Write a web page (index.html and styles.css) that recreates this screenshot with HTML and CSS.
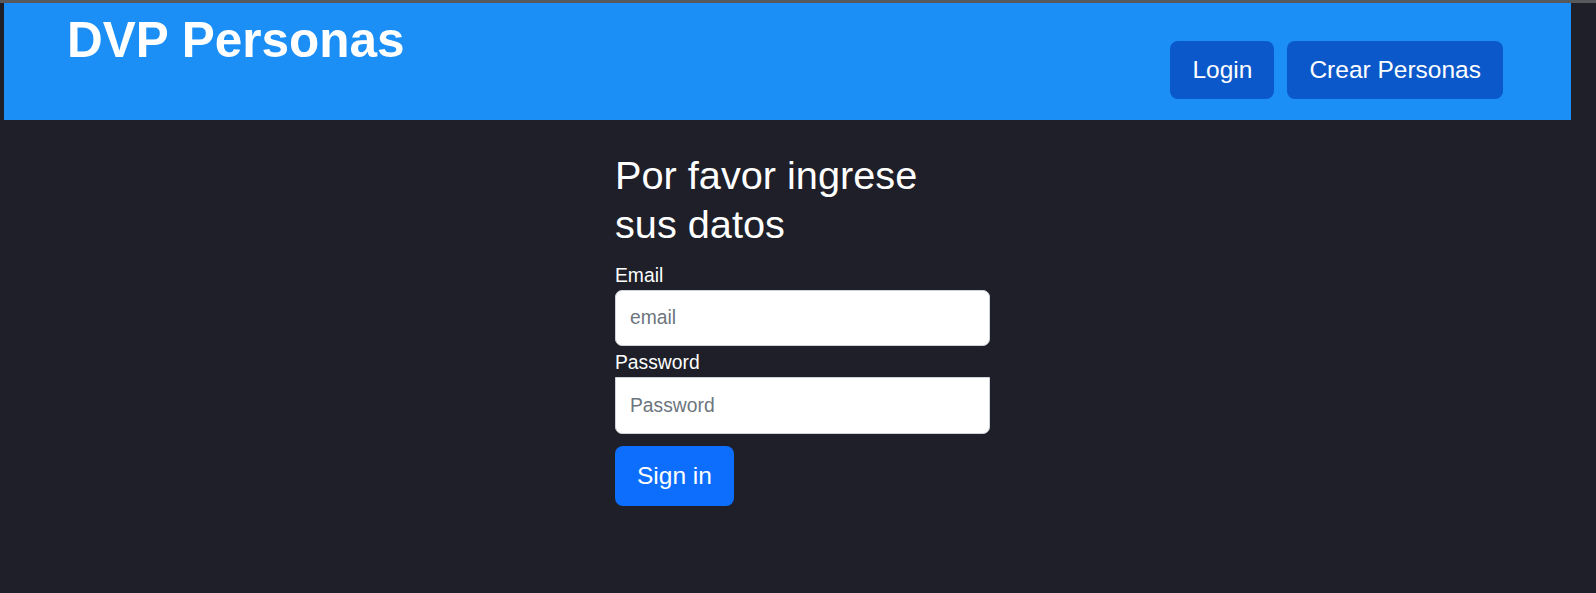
FILE: index.html
```html
<!DOCTYPE html>
<html lang="es">
<head>
<meta charset="utf-8">
<title>DVP Personas</title>
<link rel="stylesheet" href="styles.css">
</head>
<body>
<div class="topline"></div>
<header class="header">
  <h1 class="brand">DVP Personas</h1>
  <nav class="nav">
    <a class="nav-btn" href="#">Login</a>
    <a class="nav-btn" href="#">Crear Personas</a>
  </nav>
</header>
<main class="main">
  <form class="signin">
    <h2 class="signin-title">Por favor ingrese sus datos</h2>
    <label class="field-label" for="email">Email</label>
    <input class="field field-email" id="email" type="email" placeholder="email">
    <label class="field-label" for="password">Password</label>
    <input class="field field-password" id="password" type="password" placeholder="Password">
    <button class="submit" type="button">Sign in</button>
  </form>
</main>
</body>
</html>
```
FILE: styles.css
```css
* { box-sizing: border-box; }
html, body {
  margin: 0;
  padding: 0;
  background: #1e1f29;
  font-family: "Liberation Sans", Arial, sans-serif;
  color: #fff;
}
.topline {
  height: 3px;
  background: #58595d;
}
.header {
  display: flex;
  justify-content: space-between;
  align-items: flex-start;
  height: 117px;
  margin: 0 25px 0 4px;
  padding: 0 68px 0 63px;
  background: #1b8ff5;
}
.brand {
  margin: 7px 0 0;
  font-size: 49.5px;
  line-height: 60px;
  font-weight: 700;
  color: #fff;
}
.nav {
  display: flex;
  gap: 13px;
  margin-top: 38px;
}
.nav-btn {
  display: flex;
  align-items: center;
  height: 58px;
  padding: 0 22px;
  border-radius: 8px;
  background: #0b58ca;
  color: #fff;
  text-decoration: none;
  font-size: 24.5px;
}
.main {
  display: flex;
  justify-content: center;
  padding-left: 9px;
}
.signin {
  width: 375px;
  display: flex;
  flex-direction: column;
  align-items: flex-start;
  margin-top: 31px;
}
.signin-title {
  max-width: 340px;
  margin: 0 0 12px;
  font-size: 39.7px;
  line-height: 49px;
  font-weight: 400;
  color: #fff;
}
.field-label {
  font-size: 19.3px;
  line-height: 29px;
  color: #fff;
}
.field {
  width: 100%;
  height: 56px;
  padding: 0 14px;
  border: 1px solid #ced4da;
  background: #fff;
  font-family: "Liberation Sans", Arial, sans-serif;
  font-size: 19.3px;
  color: #212529;
  outline: none;
}
.field::placeholder { color: #6c757d; }
.field-email {
  border-radius: 7px;
  margin-bottom: 2px;
}
.field-password {
  height: 57px;
  border-radius: 0 0 7px 7px;
}
.submit {
  margin-top: 12px;
  height: 60px;
  padding: 0 22px;
  border: none;
  border-radius: 8px;
  background: #0d6efd;
  color: #fff;
  font-family: "Liberation Sans", Arial, sans-serif;
  font-size: 24.5px;
}
```
